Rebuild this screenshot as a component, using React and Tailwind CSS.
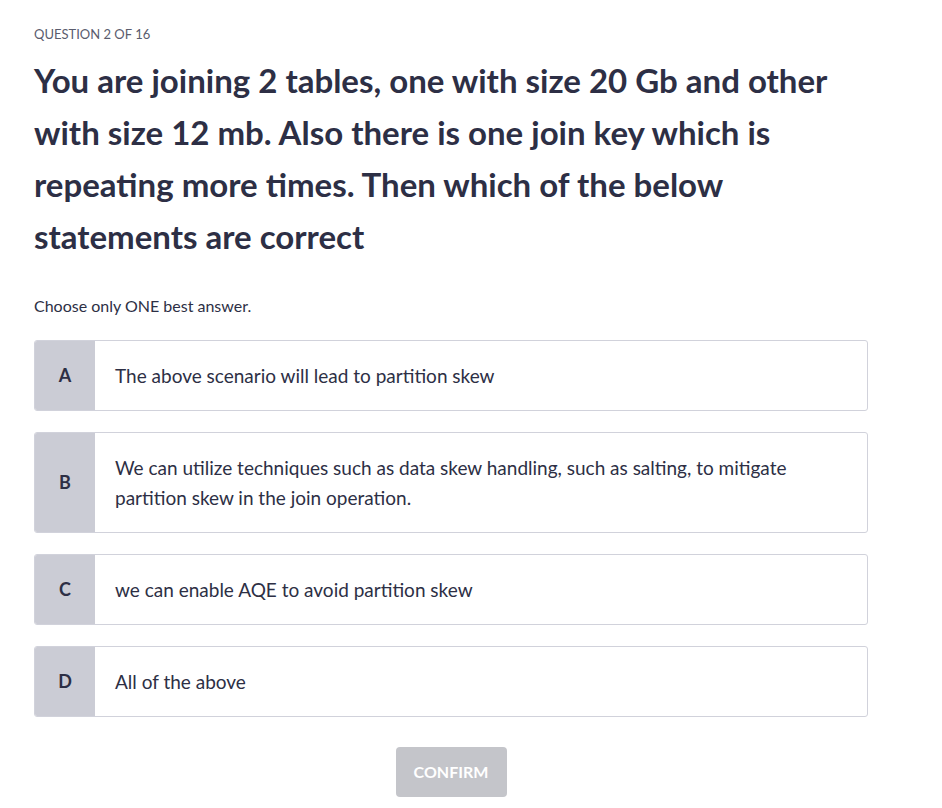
import { useState } from "react";

const options = [
  { key: "A", text: "The above scenario will lead to partition skew" },
  {
    key: "B",
    text: "We can utilize techniques such as data skew handling, such as salting, to mitigate partition skew in the join operation.",
  },
  { key: "C", text: "we can enable AQE to avoid partition skew" },
  { key: "D", text: "All of the above" },
];

const App = () => {
  const [selected, setSelected] = useState(null);

  return (
    <div
      className="min-h-screen bg-white px-[34px] pt-[26px] text-[#2d2f45]"
      style={{ fontFamily: "Lato, 'Liberation Sans', sans-serif" }}
    >
      <div className="w-[834px]">
        <p className="text-[13px] leading-[16px] text-[#5a5c6e]">
          QUESTION 2 OF 16
        </p>
        <h1 className="mt-[12px] text-[33px] leading-[52px] font-bold text-[#2d2f45]">
          You are joining 2 tables, one with size 20 Gb and other with size 12
          mb. Also there is one join key which is repeating more times. Then
          which of the below statements are correct
        </h1>
        <p className="mt-[34px] text-[16px] leading-[20px] text-[#2d2f45]">
          Choose only ONE best answer.
        </p>

        {/* Options */}
        <div className="mt-[24px] flex flex-col gap-[21px]">
          {options.map((opt) => (
            <button
              key={opt.key}
              onClick={() => setSelected(opt.key)}
              className={`flex items-stretch text-left rounded-[3px] border overflow-hidden min-h-[71px] ${
                selected === opt.key ? "border-[#5624d0]" : "border-[#d1d2db]"
              }`}
            >
              <div className="w-[60px] shrink-0 bg-[#cbccd5] flex items-center justify-center text-[18px] font-bold text-[#2d2f45]">
                {opt.key}
              </div>
              <div className="flex-1 flex items-center pl-[20px] pr-[60px] py-[19.5px] text-[19px] leading-[30px] text-[#2d2f45]">
                {opt.text}
              </div>
            </button>
          ))}
        </div>

        <div className="mt-[30px] flex justify-center">
          <button className="w-[111px] h-[50px] rounded-[4px] bg-[#c4c5ca] text-white text-[16px] font-bold">
            CONFIRM
          </button>
        </div>
      </div>
    </div>
  );
};

export default App;
